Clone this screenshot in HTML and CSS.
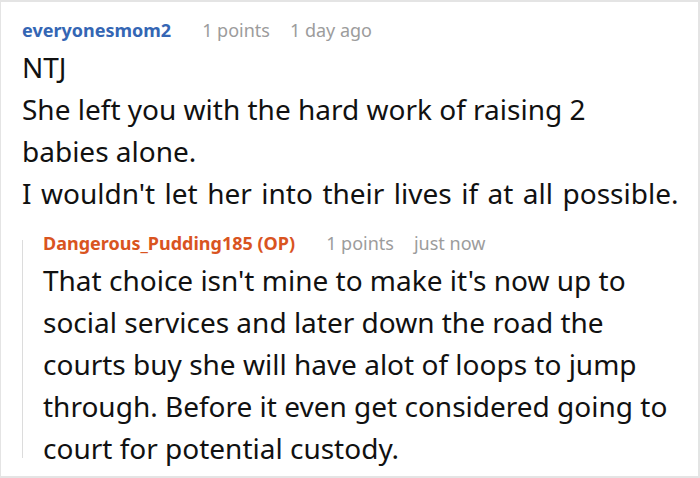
FILE: index.html
```html
<!DOCTYPE html>
<html lang="en">
<head>
<meta charset="utf-8">
<title>Comments</title>
<link rel="stylesheet" href="styles.css">
</head>
<body>
<div class="frame">
  <div class="comment">
    <div class="meta">
      <span class="author">everyonesmom2</span>
      <span class="info">1 points</span>
      <span class="info">1 day ago</span>
    </div>
    <div class="body">NTJ<br>She left you with the hard work of raising 2<br>babies alone.<br><span class="spread">I wouldn't let her into their lives if at all possible.</span></div>
    <div class="reply">
      <div class="meta">
        <span class="author op">Dangerous_Pudding185 (OP)</span>
        <span class="info">1 points</span>
        <span class="info">just now</span>
      </div>
      <div class="body">That choice isn't mine to make it's now up to<br>social services and later down the road the<br>courts buy she will have alot of loops to jump<br>through. Before it even get considered going to<br>court for potential custody.</div>
    </div>
  </div>
</div>
</body>
</html>
```

FILE: styles.css
```css
html, body {
  margin: 0;
  padding: 0;
  background: #ffffff;
}

.frame {
  box-sizing: border-box;
  width: 700px;
  height: 478px;
  overflow: hidden;
  border-top: 2px solid #e4e4e4;
  border-right: 2px solid #e4e4e4;
  border-bottom: 2px solid #e4e4e4;
  border-left: 1px solid #e4e4e4;
  padding: 15px 0 0 21px;
  font-family: "Noto Sans", "Open Sans", sans-serif;
  color: #111111;
}

.meta {
  display: flex;
  align-items: baseline;
  gap: 20px;
  font-size: 18px;
  line-height: 26px;
  white-space: nowrap;
}

.author {
  font-weight: 700;
  color: #3466b4;
  margin-right: 11px;
}

.author.op {
  color: #d9541f;
}

.info {
  color: #9c9c9c;
}

.body {
  margin-top: 3px;
  font-size: 28px;
  line-height: 42px;
  white-space: nowrap;
}

.spread {
  word-spacing: 2.2px;
}

.reply {
  position: relative;
  margin-top: 16px;
  padding-left: 21px;
}

.reply::before {
  content: "";
  position: absolute;
  left: 0;
  top: 10px;
  bottom: 11px;
  width: 1px;
  background: #dcdcdc;
}
```
